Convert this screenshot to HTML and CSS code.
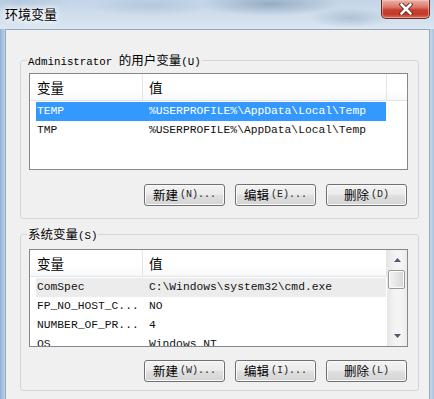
FILE: index.html
```html
<!DOCTYPE html>
<html lang="zh-CN">
<head>
<meta charset="utf-8">
<title>环境变量</title>
<link rel="stylesheet" href="styles.css">
</head>
<body>
<div class="window">
  <div class="titlebar">
    <span class="title">环境变量</span>
    <div class="close">
      <svg width="14" height="12" viewBox="0 0 14 12">
        <path d="M2.5 1.5 L11.5 10.5 M11.5 1.5 L2.5 10.5" fill="none" stroke="#5a2019" stroke-width="4.4" stroke-linecap="round"/>
        <path d="M2.5 1.5 L11.5 10.5 M11.5 1.5 L2.5 10.5" fill="none" stroke="#ffffff" stroke-width="2.6" stroke-linecap="round"/>
      </svg>
    </div>
  </div>
  <div class="client">
    <fieldset class="group group-user">
      <legend><span class="mono lg">Administrator </span>的用户变量<span class="mono lg">(U)</span></legend>
      <div class="list list-user">
        <div class="list-main">
          <div class="header">
            <div class="hcol c1">变量</div>
            <div class="hcol c2">值</div>
          </div>
          <div class="rows">
            <div class="row selected"><span class="cell c1">TEMP</span><span class="cell c2">%USERPROFILE%\AppData\Local\Temp</span></div>
            <div class="row"><span class="cell c1">TMP</span><span class="cell c2">%USERPROFILE%\AppData\Local\Temp</span></div>
          </div>
        </div>
      </div>
      <div class="buttons buttons-user">
        <button class="btn">新建<span class="mono bt">(N)...</span></button>
        <button class="btn">编辑<span class="mono bt">(E)...</span></button>
        <button class="btn">删除<span class="mono bt">(D)</span></button>
      </div>
    </fieldset>

    <fieldset class="group group-sys">
      <legend>系统变量<span class="mono lg">(S)</span></legend>
      <div class="list list-sys">
        <div class="list-main">
          <div class="header">
            <div class="hcol c1">变量</div>
            <div class="hcol c2">值</div>
          </div>
          <div class="rows">
            <div class="row current"><span class="cell c1">ComSpec</span><span class="cell c2">C:\Windows\system32\cmd.exe</span></div>
            <div class="row"><span class="cell c1">FP_NO_HOST_C...</span><span class="cell c2">NO</span></div>
            <div class="row"><span class="cell c1">NUMBER_OF_PR...</span><span class="cell c2">4</span></div>
            <div class="row"><span class="cell c1">OS</span><span class="cell c2">Windows_NT</span></div>
          </div>
        </div>
        <div class="scrollbar">
          <div class="sb-arrow">
            <svg width="7" height="4" viewBox="0 0 7 4"><polygon points="3.5,0 7,4 0,4" fill="#4e5a6e"/></svg>
          </div>
          <div class="sb-track">
            <div class="sb-thumb"></div>
          </div>
          <div class="sb-arrow">
            <svg width="7" height="4" viewBox="0 0 7 4"><polygon points="0,0 7,0 3.5,4" fill="#4e5a6e"/></svg>
          </div>
        </div>
      </div>
      <div class="buttons buttons-sys">
        <button class="btn">新建<span class="mono bt">(W)...</span></button>
        <button class="btn">编辑<span class="mono bt">(I)...</span></button>
        <button class="btn">删除<span class="mono bt">(L)</span></button>
      </div>
    </fieldset>
  </div>
</div>
</body>
</html>
```

FILE: styles.css
```css
body {
  margin: 0;
}

.window {
  width: 434px;
  height: 399px;
  overflow: hidden;
  background: linear-gradient(to right, #8fb1d8 0, #bcd1e8 5px, #d9e4ef 420px, #c9d9e9 430px, #a9c3de 434px);
  font-family: "Noto Sans CJK SC", sans-serif;
  font-size: 12.5px;
  color: #000;
}

.mono {
  font-family: "Liberation Mono", "Noto Sans CJK SC", monospace;
}

.titlebar {
  height: 29px;
  display: flex;
  justify-content: space-between;
  align-items: flex-start;
  background:
    radial-gradient(ellipse 70px 12px at 270px 4px, rgba(105, 130, 160, 0.5), transparent),
    radial-gradient(ellipse 60px 10px at 150px 6px, rgba(150, 175, 200, 0.4), transparent),
    radial-gradient(ellipse 40px 10px at 350px 18px, rgba(120, 150, 180, 0.4), transparent),
    radial-gradient(ellipse 50px 12px at 20px 2px, rgba(150, 180, 210, 0.4), transparent),
    linear-gradient(#c3d5e7, #dbe6f1);
}

.title {
  font-size: 13px;
  line-height: 15px;
  margin: 6px 0 0 5px;
  text-shadow: 0 0 4px #fff, 0 0 8px #fff, 0 0 10px #fff;
}

.close {
  width: 49px;
  height: 19px;
  margin-right: 4px;
  box-sizing: border-box;
  border: 1px solid #6a2a24;
  border-top: none;
  border-radius: 0 0 5px 5px;
  background: linear-gradient(#eab2a6 0%, #d9786a 40%, #c8402f 55%, #c43a2a 80%, #d9735c 100%);
  box-shadow: inset 0 0 0 1px rgba(255, 210, 200, 0.5);
  display: flex;
  align-items: center;
  justify-content: center;
}

.client {
  margin-left: 5px;
  width: 425px;
  height: 370px;
  box-sizing: border-box;
  background: #f0f0f0;
  border: 1px solid #95a7bd;
  border-bottom: none;
  padding-left: 14px;
}

.group {
  margin: 0;
  width: 399px;
  min-inline-size: 0;
  box-sizing: border-box;
  border: 1px solid #d0d7de;
  border-radius: 3px;
}

.group-user {
  margin-top: 23px;
  padding: 6px 10px 12px 8px;
}

.group-sys {
  margin-top: 8px;
  padding: 8px 10px 8px 8px;
}

legend {
  margin-left: -2px;
  padding: 0 1px;
  height: 14px;
  line-height: 14px;
  font-size: 12.5px;
  white-space: pre;
}

.lg {
  font-size: 10.8px;
}

.list {
  width: 379px;
  box-sizing: border-box;
  border: 1px solid #828790;
  background: #fff;
  display: flex;
}

.list-user {
  height: 97px;
}

.list-sys {
  height: 98px;
}

.list-main {
  flex: 1;
  min-width: 0;
  overflow: hidden;
}

.header {
  display: flex;
  height: 27px;
  box-sizing: border-box;
  border-bottom: 1px solid #e2e4e8;
  background: linear-gradient(#ffffff, #ffffff 60%, #f7f8fa);
  font-size: 13.5px;
}

.hcol {
  box-sizing: border-box;
  line-height: 26px;
  border-right: 1px solid #e3e5e9;
}

.hcol.c1 {
  width: 113px;
  padding-left: 7px;
}

.hcol.c2 {
  width: 244px;
  padding-left: 6px;
}

.rows {
  padding-top: 1px;
}

.row {
  display: flex;
  width: 350px;
  height: 19px;
  margin-left: 6px;
  line-height: 19px;
  font-family: "Liberation Mono", monospace;
  font-size: 11.3px;
  white-space: pre;
  color: #111;
}

.cell.c1 {
  width: 106px;
  box-sizing: border-box;
  padding-left: 1px;
}

.cell.c2 {
  padding-left: 7px;
}

.selected {
  background: #3399ff;
  color: #fff;
}

.current {
  background: #ececec;
}

.scrollbar {
  width: 20px;
  display: flex;
  flex-direction: column;
  background: linear-gradient(to right, #e6e6e6, #f4f4f4 40%, #f4f4f4 70%, #ebebeb);
}

.sb-arrow {
  height: 20px;
  display: flex;
  align-items: center;
  justify-content: center;
}

.sb-track {
  flex: 1;
}

.sb-thumb {
  height: 19px;
  margin: 0 2px 0 1px;
  box-sizing: border-box;
  border: 1px solid #9a9a9a;
  border-radius: 2px;
  background: linear-gradient(to right, #f4f4f4, #e6e6e6 50%, #d6d6d6);
  box-shadow: inset 0 0 0 1px #fbfbfb;
}

.buttons {
  display: flex;
  justify-content: flex-end;
  gap: 10px;
  padding-right: 1px;
}

.buttons-user {
  margin-top: 14px;
}

.buttons-sys {
  margin-top: 13px;
}

.btn {
  width: 81px;
  height: 22px;
  padding: 0;
  box-sizing: border-box;
  border: 1px solid #707070;
  border-radius: 3px;
  background: linear-gradient(#f3f3f3 0%, #ececec 45%, #dedede 55%, #d4d4d4 100%);
  box-shadow: inset 0 0 0 1px #fbfbfb;
  font-family: "Noto Sans CJK SC", sans-serif;
  font-size: 12.5px;
  color: #000;
  display: flex;
  align-items: center;
  justify-content: center;
  line-height: 14px;
}

.bt {
  font-size: 10px;
  margin-left: 2px;
  color: #222;
}
```
